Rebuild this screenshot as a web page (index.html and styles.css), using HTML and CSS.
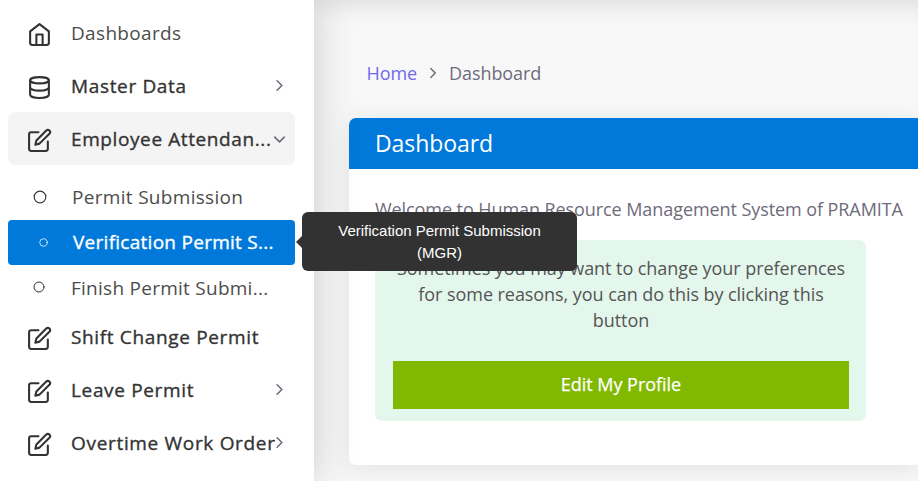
FILE: index.html
```html
<!DOCTYPE html>
<html lang="en">
<head>
<meta charset="utf-8">
<title>Dashboard</title>
<link rel="stylesheet" href="styles.css">
</head>
<body>
<svg class="sprite" aria-hidden="true">
  <symbol id="home" viewBox="0 0 24 24"><path d="M3 9l9-7 9 7v11a2 2 0 0 1-2 2H5a2 2 0 0 1-2-2z"/><path d="M9 22V12h6v10"/></symbol>
  <symbol id="database" viewBox="0 0 24 24"><ellipse cx="12" cy="5" rx="9" ry="3"/><path d="M21 12c0 1.660-4 3-9 3s-9-1.340-9-3"/><path d="M3 5v14c0 1.660 4 3 9 3s9-1.340 9-3V5"/></symbol>
  <symbol id="edit" viewBox="0 0 24 24"><path d="M11 4H4a2 2 0 0 0-2 2v14a2 2 0 0 0 2 2h14a2 2 0 0 0 2-2v-7"/><path d="M18.500 2.500a2.121 2.121 0 0 1 3 3L12 15l-4 1 1-4 9.500-9.500z"/></symbol>
  <symbol id="circle" viewBox="0 0 24 24"><circle cx="12" cy="12" r="10"/></symbol>
  <symbol id="right" viewBox="0 0 24 24"><path d="M9 18l6-6-6-6"/></symbol>
  <symbol id="down" viewBox="0 0 24 24"><path d="M6 9l6 6 6-6"/></symbol>
</svg>
<div class="app">
  <nav class="sidebar">
    <a class="item light"><svg class="icon"><use href="#home"/></svg><span class="label">Dashboards</span></a>
    <a class="item"><svg class="icon"><use href="#database"/></svg><span class="label master">Master Data</span><svg class="chev"><use href="#right"/></svg></a>
    <a class="item open"><svg class="icon"><use href="#edit"/></svg><span class="label employee">Employee Attendan...</span><svg class="chev"><use href="#down"/></svg></a>
    <div class="submenu">
      <a class="sub first"><svg class="dot"><use href="#circle"/></svg><span class="label">Permit Submission</span></a>
      <a class="sub active"><svg class="dot"><use href="#circle"/></svg><span class="label">Verification Permit S...</span>
        <span class="tooltip">Verification Permit Submission (MGR)</span></a>
      <a class="sub last"><svg class="dot"><use href="#circle"/></svg><span class="label">Finish Permit Submi...</span></a>
    </div>
    <a class="item"><svg class="icon"><use href="#edit"/></svg><span class="label shift">Shift Change Permit</span></a>
    <a class="item"><svg class="icon"><use href="#edit"/></svg><span class="label leave">Leave Permit</span><svg class="chev"><use href="#right"/></svg></a>
    <a class="item"><svg class="icon"><use href="#edit"/></svg><span class="label overtime">Overtime Work Order</span><svg class="chev"><use href="#right"/></svg></a>
  </nav>
  <main class="content">
    <div class="crumbs"><a class="home">Home</a><svg class="sep"><use href="#right"/></svg><span>Dashboard</span></div>
    <section class="card">
      <h1 class="card-head">Dashboard</h1>
      <div class="card-body">
        <p class="welcome">Welcome to Human Resource Management System of PRAMITA</p>
        <div class="notice">
          <p class="notice-text">Sometimes you may want to change your preferences<br>for some reasons, you can do this by clicking this<br>button</p>
          <a class="button">Edit My Profile</a>
        </div>
      </div>
    </section>
  </main>
</div>
</body>
</html>
```
FILE: styles.css
```css
* { box-sizing: border-box; }
body { margin: 0; font-family: "Open Sans", sans-serif; background: #f8f8f8; overflow: hidden; }
svg { fill: none; stroke: currentColor; stroke-width: 2; stroke-linecap: round; stroke-linejoin: round; flex: none; }
.sprite { display: none; }
.app { display: flex; height: 481px; }

.sidebar { width: 314px; flex: none; padding: 6px 19px 0 8px; background: #fff; position: relative; z-index: 2; box-shadow: 0 0 40px rgba(34, 41, 47, .22); color: #333; }
.item { display: flex; align-items: center; height: 53px; padding: 0 6px 0 19px; border-radius: 7px; }
.icon { width: 25px; height: 25px; margin: 3px 19px 0 0; }
.label { white-space: nowrap; font-size: 19px; letter-spacing: .65px; line-height: 28px; -webkit-text-stroke: .35px currentColor; }
.light .label { color: #4c4c4c; letter-spacing: .33px; -webkit-text-stroke: 0; }
.chev { width: 19px; height: 19px; margin-left: auto; color: #6e6b7b; }
.open { background: #f4f4f4; }
.employee { letter-spacing: .6px; }
.employee + .chev { margin: 1px 0 0 -1px; }
.overtime { letter-spacing: .68px; }
.overtime + .chev { margin-left: -6px; }

.submenu { height: 145px; padding-top: 10px; }
.sub { display: flex; align-items: center; height: 45px; padding-left: 25px; position: relative; }
.sub .label { color: #4c4c4c; letter-spacing: .31px; -webkit-text-stroke: 0; }
.first { padding-bottom: 2px; }
.dot { width: 14px; height: 14px; margin-right: 25px; }
.active { background: #0079db; border-radius: 4px; color: #fff; padding-left: 31px; padding-bottom: 1px; }
.active .dot { width: 9px; height: 9px; margin-right: 25px; }
.sub.active .label { color: #fff; letter-spacing: .27px; -webkit-text-stroke: .35px currentColor; }
.sub.last .label { letter-spacing: .26px; }
.last .dot { width: 12px; height: 12px; margin: -2px 26px 0 0; }

.tooltip { position: absolute; left: 294px; top: -8px; width: 275px; height: 59px; padding: 8px 30px 0 30px; border-radius: 6px; background: #323232; color: #fff; font: 15px/22px "Liberation Sans", Arial, sans-serif; text-align: center; }
.tooltip::before { content: ""; position: absolute; left: -6px; top: 24px; border: 6px solid transparent; border-left: 0; border-right-color: #323232; }

.content { flex: 1; min-width: 0; padding: 59px 0 0 35px; color: #6e6b7b; box-shadow: inset 0 24px 24px -20px rgba(34, 41, 47, .14); }
.crumbs { display: flex; align-items: center; height: 28px; padding-left: 17.5px; font-size: 18px; letter-spacing: -.08px; }
.home { color: #7367f0; }
.sep { width: 18px; height: 18px; margin: 0 7px; }
.card { height: 347px; margin-top: 31px; border-radius: 7px 0 0 7px; background: #fff; box-shadow: 0 4px 24px rgba(34, 41, 47, .1); }
.card-head { height: 51px; margin: 0; padding-left: 26px; border-radius: 7px 0 0; background: #0079db; color: #fff; font-size: 23px; line-height: 50px; font-weight: 400; letter-spacing: -.08px; }
.card-body { padding: 27px 15px 0 26px; }
.welcome { margin: 0; font-size: 18px; line-height: 27px; white-space: nowrap; letter-spacing: -.075px; }
.notice { width: 491px; height: 181px; margin-top: 17px; padding: 15px 17px 0 18px; border-radius: 7px; background: #e4f7ec; }
.notice-text { margin: 0 0 28px; font-size: 18px; line-height: 26px; text-align: center; color: #555; white-space: nowrap; letter-spacing: -.06px; }
.button { display: block; height: 48px; background: #81b900; color: #fff; font-size: 18px; line-height: 47px; text-align: center; letter-spacing: -.03px; -webkit-text-stroke: .25px currentColor; }
```
